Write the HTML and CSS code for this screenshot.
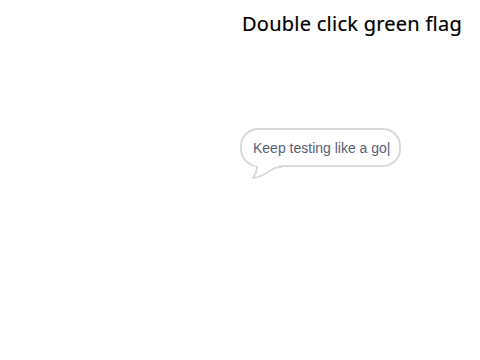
FILE: index.html
```html
<!DOCTYPE html>
<html>
<head>
<meta charset="utf-8">
<link rel="stylesheet" href="styles.css">
</head>
<body>
<div class="stage">
  <div class="title">Double click green flag</div>
  <div class="bubble">
    <div class="bubble-box">Keep testing like a go|</div>
    <svg class="tail" width="34" height="18" viewBox="0 0 34 18">
      <path d="M2 0 L 30 0 L 30 3 C 24 6, 16 11, 9 13 L 4 14 C 6 11, 8 7, 8 2 Z" fill="#fff"/>
      <path d="M8 2 C 8 7, 6 11, 4 14 C 10 14, 18 9, 24 5 C 26 3.5, 28 3, 33 3" fill="none" stroke="#d9d9d9" stroke-width="2" stroke-linejoin="round"/>
    </svg>
  </div>
</div>
</body>
</html>
```
FILE: styles.css
```css
html, body { margin: 0; padding: 0; background: #fff; }
.stage { width: 480px; height: 360px; position: relative; overflow: hidden; }
.title {
  position: absolute; right: 18px; top: 10px;
  font-family: "Noto Sans", sans-serif; font-size: 20px; letter-spacing: 0.25px; color: #000;
  -webkit-text-stroke: 0.2px #000;
}
.bubble { position: absolute; left: 240px; top: 128px; }
.bubble-box {
  position: relative; z-index: 1;
  height: 35px; width: 146px; box-sizing: content-box;
  border: 2px solid #d9d9d9; border-radius: 18px; background: #fff;
  font-family: "Liberation Sans", Arial, sans-serif; font-size: 14px; color: #575e75;
  line-height: 37px; padding-left: 11px;
}
.tail { position: absolute; left: 9px; top: 36px; z-index: 2; display: block; }
```
